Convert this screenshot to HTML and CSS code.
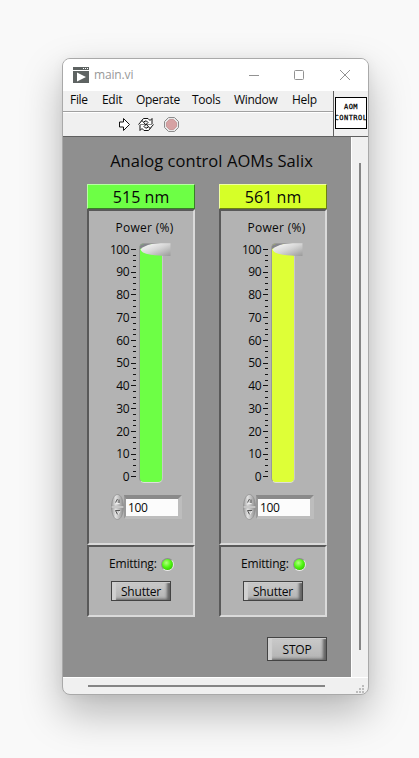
FILE: index.html
```
<!DOCTYPE html>
<html lang="en">
<head>
<meta charset="utf-8">
<title>main.vi</title>
<link rel="stylesheet" href="styles.css">
</head>
<body>
<svg class="defs" width="0" height="0">
  <defs>
    <linearGradient id="metal" x1="0" y1="0" x2="1" y2="1"><stop offset="0" stop-color="#fff"/><stop offset=".5" stop-color="#d6d6d6"/><stop offset="1" stop-color="#999"/></linearGradient>
    <linearGradient id="spin" x1="0" y1="0" x2="1" y2="0"><stop offset="0" stop-color="#a0a0a0"/><stop offset=".35" stop-color="#e2e2e2"/><stop offset="1" stop-color="#8c8c8c"/></linearGradient>
    <symbol id="ticks" viewBox="0 0 5 230">
      <path fill="none" stroke="#111" d="M0 1.5h5M0 24.5h5M0 46.5h5M0 69.5h5M0 92.5h5M0 115.5h5M0 137.5h5M0 160.5h5M0 183.5h5M0 206.5h5M0 228.5h5M2 7.5h3M2 12.5h3M2 18.5h3M2 29.5h3M2 35.5h3M2 41.5h3M2 52.5h3M2 58.5h3M2 64.5h3M2 75.5h3M2 81.5h3M2 86.5h3M2 98.5h3M2 103.5h3M2 109.5h3M2 120.5h3M2 126.5h3M2 132.5h3M2 143.5h3M2 149.5h3M2 155.5h3M2 166.5h3M2 172.5h3M2 177.5h3M2 189.5h3M2 194.5h3M2 200.5h3M2 211.5h3M2 217.5h3M2 223.5h3"/>
    </symbol>
    <symbol id="knob" viewBox="0 0 31 14">
      <path fill="#85858c" d="M0 6V3Q1 1 4 1h8z"/>
      <path fill="url(#metal)" d="M0.500 6.500Q3 3 12 1L20 .3h10.500V13H24Q8 12 3 9.500Q1 8 .5 6.500z"/>
    </symbol>
    <symbol id="spinner" viewBox="0 0 13 26">
      <path fill="url(#spin)" stroke="#909090" stroke-width=".8" d="M.5 12.300C.8 5 3.500.5 6.500.5S12.200 5 12.500 12.300zM.5 13.700C.8 21 3.500 25.500 6.500 25.500S12.200 21 12.500 13.700z"/>
      <path fill="none" stroke="#555" d="M4.500 8.500L6.500 5M8 5.500v3.500"/>
      <path fill="none" stroke="#555" d="M9 16.500H4.500L6.500 20.500"/>
      <path fill="none" stroke="#eee" d="M.8 13h11.400M7 20.500l2-3.500M5 9.500h3.500"/>
    </symbol>
  </defs>
</svg>
<main class="window">
  <header class="titlebar">
    <svg class="app-icon" width="16" height="16" viewBox="0 0 16 16"><path fill="#5e6362" d="M0 0h16v16H0z"/><path fill="#fff" d="M0 3h16v1H0zM10 1h1v1h-1zM12 1h1v1h-1zM14 1h1v1h-1zM4 5.500l9 4.500-9 4.500z"/></svg>
    <span class="title">main.vi</span>
    <svg class="controls" width="104" height="12" viewBox="0 0 104 12" fill="none" stroke="#929292"><path d="M0 6.500h10"/><rect x="45.500" y="1.500" width="9" height="9" rx="1"/><path d="M91 1l10 10M101 1L91 11"/></svg>
  </header>
  <div class="top">
    <div class="bars">
      <nav class="menu"><span class="m-file">File</span><span class="m-edit">Edit</span><span class="m-operate">Operate</span><span class="m-tools">Tools</span><span class="m-window">Window</span><span class="m-help">Help</span></nav>
      <div class="toolbar">
        <svg width="62" height="16" viewBox="0 0 62 16">
          <path fill="#fff" stroke="#111" d="M1.500 6h4V2.500L11.500 8.500 5.500 14.500V11h-4z"/>
          <g fill="#fff" stroke="#111"><path d="M23 5.500L25.500 2.500H30L32 4.500 34 2.500V8.500H28L30 6.500 28.500 5H27L25.500 6.500"/><path d="M33 11.500L30.500 14.500H26L24 12.500 22 14.500V8.500H28L26 10.500 27.500 12H29L30.500 10.500"/><path d="M20.500 8.500L24 4.500 27.500 8.500"/><path d="M35.500 8.500L32 12.500 28.500 8.500"/></g>
          <path fill="#e7e7e7" stroke="#8c8c8c" d="M50.500 1.500h6l4 4v6l-4 4h-6l-4-4v-6z"/><path fill="#d6a2a3" stroke="#c99b9c" d="M51.500 3.500h4l3 3v4l-3 3h-4l-3-3v-4z"/>
        </svg>
      </div>
    </div>
    <div class="vi-area"><div class="vi-icon"><span>AOM</span><span>CONTROL</span></div></div>
  </div>
  <div class="client">
    <section class="canvas">
      <h1>Analog control AOMs Salix</h1>
      <div class="channels">
        <article class="channel green">
          <h2>515 nm</h2>
          <div class="power">
            <div class="label">Power (%)</div>
            <div class="slider">
              <div class="scale"><span>100</span><span>90</span><span>80</span><span>70</span><span>60</span><span>50</span><span>40</span><span>30</span><span>20</span><span>10</span><span>0</span></div>
              <svg class="ticks" width="5" height="230"><use href="#ticks"/></svg>
              <div class="track"><svg class="knob" width="31" height="14"><use href="#knob"/></svg></div>
            </div>
            <div class="number"><svg width="13" height="26"><use href="#spinner"/></svg><div class="field">100</div></div>
          </div>
          <div class="status"><div class="emit"><span>Emitting:</span><i class="led"></i></div><button class="btn">Shutter</button></div>
        </article>
        <article class="channel yellow">
          <h2>561 nm</h2>
          <div class="power">
            <div class="label">Power (%)</div>
            <div class="slider">
              <div class="scale"><span>100</span><span>90</span><span>80</span><span>70</span><span>60</span><span>50</span><span>40</span><span>30</span><span>20</span><span>10</span><span>0</span></div>
              <svg class="ticks" width="5" height="230"><use href="#ticks"/></svg>
              <div class="track"><svg class="knob" width="31" height="14"><use href="#knob"/></svg></div>
            </div>
            <div class="number"><svg width="13" height="26"><use href="#spinner"/></svg><div class="field">100</div></div>
          </div>
          <div class="status"><div class="emit"><span>Emitting:</span><i class="led"></i></div><button class="btn">Shutter</button></div>
        </article>
      </div>
      <button class="btn stop">STOP</button>
    </section>
    <div class="vscroll"><i></i></div>
  </div>
  <footer class="hscroll"><i></i><svg width="9" height="9" viewBox="0 0 9 9"><path fill="#bcbcbc" d="M6 0h2v2H6zM3 3h2v2H3zM6 3h2v2H6zM0 6h2v2H0zM3 6h2v2H3zM6 6h2v2H6z"/></svg></footer>
</main>
</body>
</html>
```
FILE: styles.css
```
* { box-sizing: border-box; }
body { margin: 0; height: 758px; overflow: hidden; padding: 58px 50px 0 62px; background: #f9f9f9; font: 12px/16px "Open Sans", "Noto Sans", sans-serif; letter-spacing: -.3px; color: #080808; }
.defs { position: absolute; }
h1, h2 { margin: 0; font-weight: 400; }
.window { width: 307px; height: 637px; border: 1px solid #a9a9a9; border-radius: 8px; overflow: hidden; background: #f0f0f0; box-shadow: 0 18px 42px rgba(0,0,0,.27), 0 1px 12px rgba(0,0,0,.05); }
.titlebar { height: 32px; background: #fff; display: flex; align-items: center; padding: 0 15px 0 10px; }
.title { margin-left: 5px; color: #999; letter-spacing: -.15px; }
.controls { margin-left: auto; margin-top: -1px; }
.app-icon { margin-top: -1px; }
.top { display: flex; height: 46px; border-bottom: 1px solid #606060; }
.bars { width: 270px; }
.menu { height: 21px; border-bottom: 1px solid #a0a0a0; display: flex; padding: 1px 0 0 7px; white-space: nowrap; }
.m-file { width: 32px; }
.m-edit { width: 34px; }
.m-operate { width: 56px; }
.m-tools { width: 42px; }
.m-window { width: 58px; }
.toolbar { height: 24px; border-top: 1px solid #fff; padding: 3px 0 0 55px; }
.toolbar svg { display: block; }
.vi-area { flex: 1; border-left: 1px solid #606060; padding: 6px 0 0 1px; }
.vi-icon { width: 32px; height: 32px; border: 1px solid #000; background: #fff; overflow: hidden; display: flex; flex-direction: column; align-items: center; padding-top: 4px; font: 7px/11px "DejaVu Sans Mono", monospace; letter-spacing: .5px; color: #000; -webkit-text-stroke: .25px #000; }
.client { display: flex; height: 540px; }
.canvas { width: 288px; background: #8f8f8f; padding: 13px 24px 0; }
h1 { font-size: 16.5px; line-height: 22px; height: 34px; letter-spacing: .05px; white-space: nowrap; text-align: center; margin: 0 -10px 0 -6px; padding-left: 5px; }
.channels { display: flex; gap: 24px; }
.channel { width: 108px; }
.green { --c: #6dff45; --light: #b6ffa2; --dark: #397f27; --fill: #6dff45; }
.yellow { --c: #d6ff28; --light: #f0ffa0; --dark: #6d8114; --fill: #deff37; }
h2 { height: 25px; background: var(--c); border: 1px solid var(--light); border-right-color: var(--dark); border-bottom-color: var(--dark); font-size: 16px; line-height: 24px; text-align: center; letter-spacing: .05px; }
.power, .status { background: #b3b3b3; border: 2px solid #595959; border-right-color: #dadada; border-bottom-color: #dadada; }
.power { height: 336px; padding-top: 9px; }
.label { text-align: center; padding-left: 7px; letter-spacing: .3px; }
.slider { display: flex; height: 241px; margin-top: 6px; }
.scale { width: 40px; margin-top: -.5px; text-align: right; letter-spacing: -.5px; }
.scale span { display: block; height: 22.750px; }
.ticks { margin: 6px 0 0 2px; }
.track { position: relative; margin: 1px 0 0 3px; width: 24px; height: 240px; border: 1px solid #999; border-right-color: #c9c9c9; border-bottom-color: #dedede; border-radius: 5px; background: var(--fill); }
.knob { position: absolute; left: 0; top: -1px; }
.number { display: flex; align-items: center; margin: 11px 0 0 22px; }
.field { width: 58px; height: 24px; border: 4px solid #8a8a8a; border-left: 2px solid #999; border-right: 4px solid #bdbdbd; border-bottom: 3px solid #bdbdbd; background: #fcfcfc; padding-left: 2px; line-height: 17px; letter-spacing: -.4px; }
.status { height: 72px; padding: 7px 0 0 20px; }
.emit { display: flex; align-items: center; height: 20px; margin-bottom: 7px; letter-spacing: -.2px; }
.emit span { width: 52px; white-space: nowrap; }
.led { width: 13px; height: 13px; margin-top: 1px; border: 1px solid #8d8d8d; border-right-color: #e8e8e8; border-bottom-color: #eee; border-radius: 50%; background: radial-gradient(circle at 40% 35%, #b4ff80, #50f611 45%, #28a900); }
.btn { display: block; width: 60px; height: 20px; margin: 0 0 0 2px; border: 1px solid #434343; padding: 1px 0 0; background: linear-gradient(#cacaca, #b3b3b3); box-shadow: inset 4px 1px 1px #d0d0d0, inset -3px -1px 3px #626262; font: inherit; line-height: 17px; letter-spacing: -.2px; color: inherit; }
.stop { height: 24px; margin: 20px 0 0 180px; }
.vscroll { flex: 1; border-left: 1px solid #fff; padding: 26px 0 0 7px; }
.vscroll i { display: block; width: 2px; height: 487px; background: #858585; }
.hscroll { height: 17px; border-top: 1px solid #fff; padding: 7px 3px 0 25px; display: flex; justify-content: space-between; }
.hscroll i { width: 237px; height: 2px; background: #858585; }
```
